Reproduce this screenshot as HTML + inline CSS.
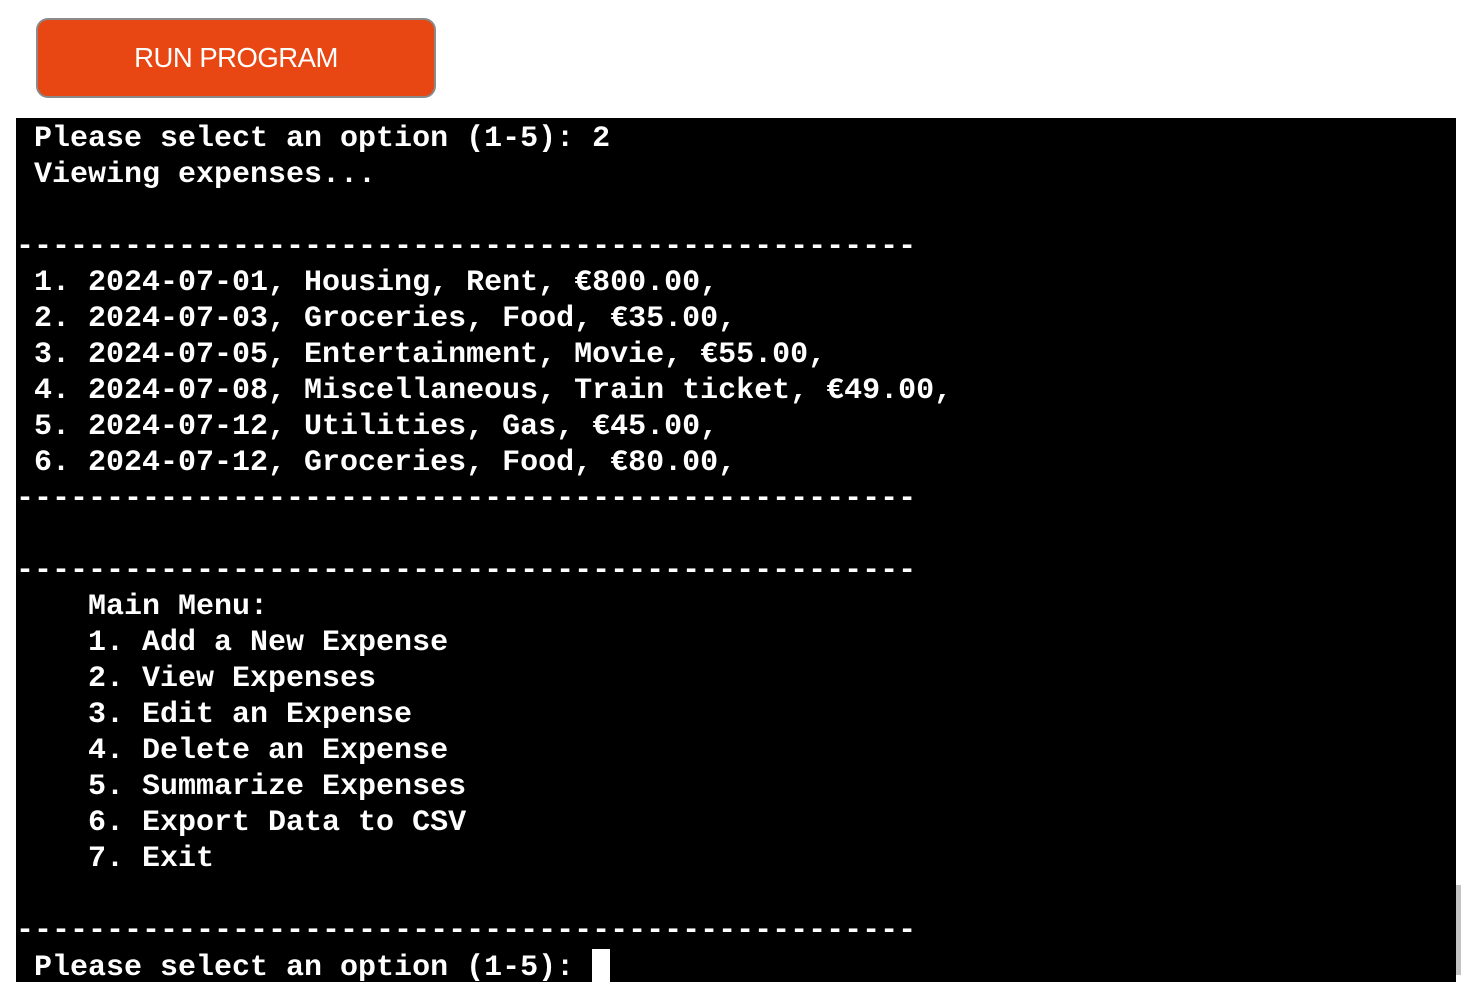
<!DOCTYPE html>
<html><head><meta charset="utf-8"><style>
html,body{margin:0;padding:0;background:#fff;width:1461px;height:998px;overflow:hidden;position:relative}
.btn{position:absolute;left:36px;top:18px;width:396px;height:76px;background:#e84613;border:2px solid #8a8a8a;border-radius:12px;color:#fff;font:27.5px "Liberation Sans",Arial,sans-serif;text-align:center;line-height:76px;letter-spacing:-0.5px}
.term{position:absolute;left:16px;top:118px;width:1440px;height:864px;background:#000;overflow:hidden}
pre{margin:0;position:absolute;left:0;top:3px;color:#fff;font:bold 30px/36px "Liberation Mono",monospace;white-space:pre}
.cur{display:inline-block;width:18px;height:34px;background:#fff;vertical-align:-8px}
.sb{position:absolute;left:1456px;top:885px;width:5px;height:90px;background:#c4c4c4}
</style></head><body>
<div class="btn">RUN PROGRAM</div>
<div class="term"><pre> Please select an option (1-5): 2
 Viewing expenses...

--------------------------------------------------
 1. 2024-07-01, Housing, Rent, €800.00,
 2. 2024-07-03, Groceries, Food, €35.00,
 3. 2024-07-05, Entertainment, Movie, €55.00,
 4. 2024-07-08, Miscellaneous, Train ticket, €49.00,
 5. 2024-07-12, Utilities, Gas, €45.00,
 6. 2024-07-12, Groceries, Food, €80.00,
--------------------------------------------------

--------------------------------------------------
    Main Menu:
    1. Add a New Expense
    2. View Expenses
    3. Edit an Expense
    4. Delete an Expense
    5. Summarize Expenses
    6. Export Data to CSV
    7. Exit

--------------------------------------------------
 Please select an option (1-5): <span class="cur"></span></pre></div>
<div class="sb"></div>
</body></html>
